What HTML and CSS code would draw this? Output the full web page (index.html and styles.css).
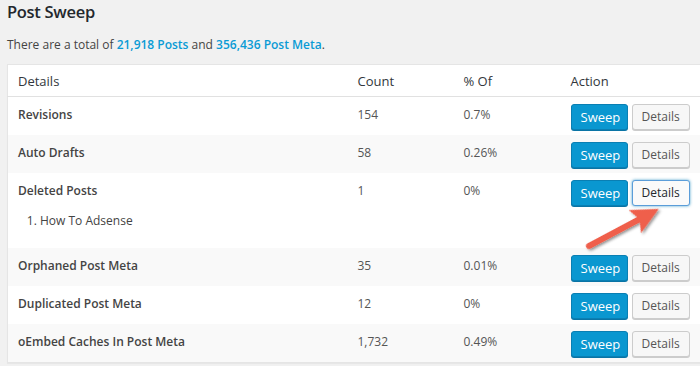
FILE: index.html
```html
<!DOCTYPE html>
<html>
<head>
<meta charset="utf-8">
<link rel="stylesheet" href="styles.css">
</head>
<body>
<div class="wrap">
  <h1 class="title">Post Sweep</h1>
  <p class="summary">There are a total of <a class="num">21,918 Posts</a> and <a class="num">356,436 Post Meta</a>.</p>
  <table class="sweep">
    <colgroup>
      <col class="c-details"><col class="c-count"><col class="c-pct"><col class="c-action">
    </colgroup>
    <thead>
      <tr><th>Details</th><th>Count</th><th>% Of</th><th>Action</th></tr>
    </thead>
    <tbody>
      <tr>
        <td class="name">Revisions</td><td>154</td><td>0.7%</td>
        <td class="action"><button class="btn primary">Sweep</button><button class="btn">Details</button></td>
      </tr>
      <tr>
        <td class="name">Auto Drafts</td><td>58</td><td>0.26%</td>
        <td class="action"><button class="btn primary">Sweep</button><button class="btn">Details</button></td>
      </tr>
      <tr>
        <td class="name">Deleted Posts
          <ol class="items"><li>How To Adsense</li></ol>
        </td><td>1</td><td>0%</td>
        <td class="action"><button class="btn primary">Sweep</button><button class="btn focus">Details</button></td>
      </tr>
      <tr>
        <td class="name">Orphaned Post Meta</td><td>35</td><td>0.01%</td>
        <td class="action"><button class="btn primary">Sweep</button><button class="btn">Details</button></td>
      </tr>
      <tr>
        <td class="name">Duplicated Post Meta</td><td>12</td><td>0%</td>
        <td class="action"><button class="btn primary">Sweep</button><button class="btn">Details</button></td>
      </tr>
      <tr>
        <td class="name">oEmbed Caches In Post Meta</td><td>1,732</td><td>0.49%</td>
        <td class="action"><button class="btn primary">Sweep</button><button class="btn">Details</button></td>
      </tr>
    </tbody>
  </table>
</div>
<svg class="arrow" width="700" height="366" viewBox="0 0 700 366">
  <defs>
    <filter id="sh" x="-20%" y="-20%" width="140%" height="140%">
      <feDropShadow dx="1" dy="2" stdDeviation="1.5" flood-color="#000" flood-opacity="0.45"/>
    </filter>
  </defs>
  <g transform="translate(589 246) rotate(-28)" filter="url(#sh)">
    <path d="M0 -3 L56 -3 L52 -13 L79 0 L52 13 L56 3 L0 3 A3 3 0 0 1 0 -3 Z" fill="#ef5f4c"/>
  </g>
</svg>
</body>
</html>
```
FILE: styles.css
```css
html, body {
  margin: 0;
  padding: 0;
}
body {
  background: #f1f1f1;
  font-family: "Open Sans", "Liberation Sans", sans-serif;
  color: #444;
  font-size: 12px;
  width: 700px;
  height: 366px;
  overflow: hidden;
  position: relative;
}
.wrap {
  padding: 0 0 0 7px;
}
.title {
  margin: 0;
  padding-top: 1px;
  font-size: 16.5px;
  font-weight: 600;
  letter-spacing: -0.3px;
  line-height: 22px;
  color: #23282d;
}
.summary {
  margin: 12px 0 0 0;
  line-height: 19px;
  color: #444;
}
.num {
  color: #0a9bd5;
  font-weight: 600;
  text-decoration: none;
}
.sweep {
  margin-top: 10px;
  width: 693px;
  border-collapse: collapse;
  table-layout: fixed;
  background: #fff;
  border: 1px solid #e5e5e5;
  box-shadow: 0 1px 1px rgba(0,0,0,.04);
}
.c-details { width: 340px; }
.c-count { width: 106px; }
.c-pct { width: 107px; }
.c-action { width: 140px; }
.sweep th {
  text-align: left;
  font-weight: 400;
  font-size: 13px;
  color: #32373c;
  padding: 6px 10px 5px;
  line-height: 20px;
  border-bottom: 1px solid #e1e1e1;
}
.sweep td {
  padding: 8px 10px;
  line-height: 19px;
  vertical-align: top;
  color: #555;
}
.sweep tbody tr:nth-child(even) td {
  background: #f9f9f9;
}
.sweep td.name {
  font-weight: 600;
  color: #444;
}
.sweep td.action {
  padding: 7px 10px 5px;
  white-space: nowrap;
}
.items {
  margin: 11px 0 10px 0;
  padding-left: 22px;
  font-weight: 400;
  color: #444;
}
.btn {
  font-family: "Open Sans", "Liberation Sans", sans-serif;
  font-size: 12px;
  height: 26px;
  line-height: 24px;
  padding: 0 9px;
  margin: 0 4px 0 0;
  border-radius: 3px;
  border: 1px solid #ccc;
  background: #f7f7f7;
  color: #555;
  box-shadow: 0 1px 0 #ccc;
  vertical-align: top;
  cursor: pointer;
}
.btn.primary {
  background: #0a97d0;
  border-color: #0a7fb3;
  color: #fff;
  font-size: 13px;
  box-shadow: 0 1px 0 #0a74a5;
  width: 57px;
}
.btn.focus {
  background: #fafafa;
  border-color: #5b9dd9;
  color: #23282d;
  box-shadow: 0 0 3px rgba(30,140,190,.8);
}
.arrow {
  position: absolute;
  left: 0;
  top: 0;
  pointer-events: none;
}
```
